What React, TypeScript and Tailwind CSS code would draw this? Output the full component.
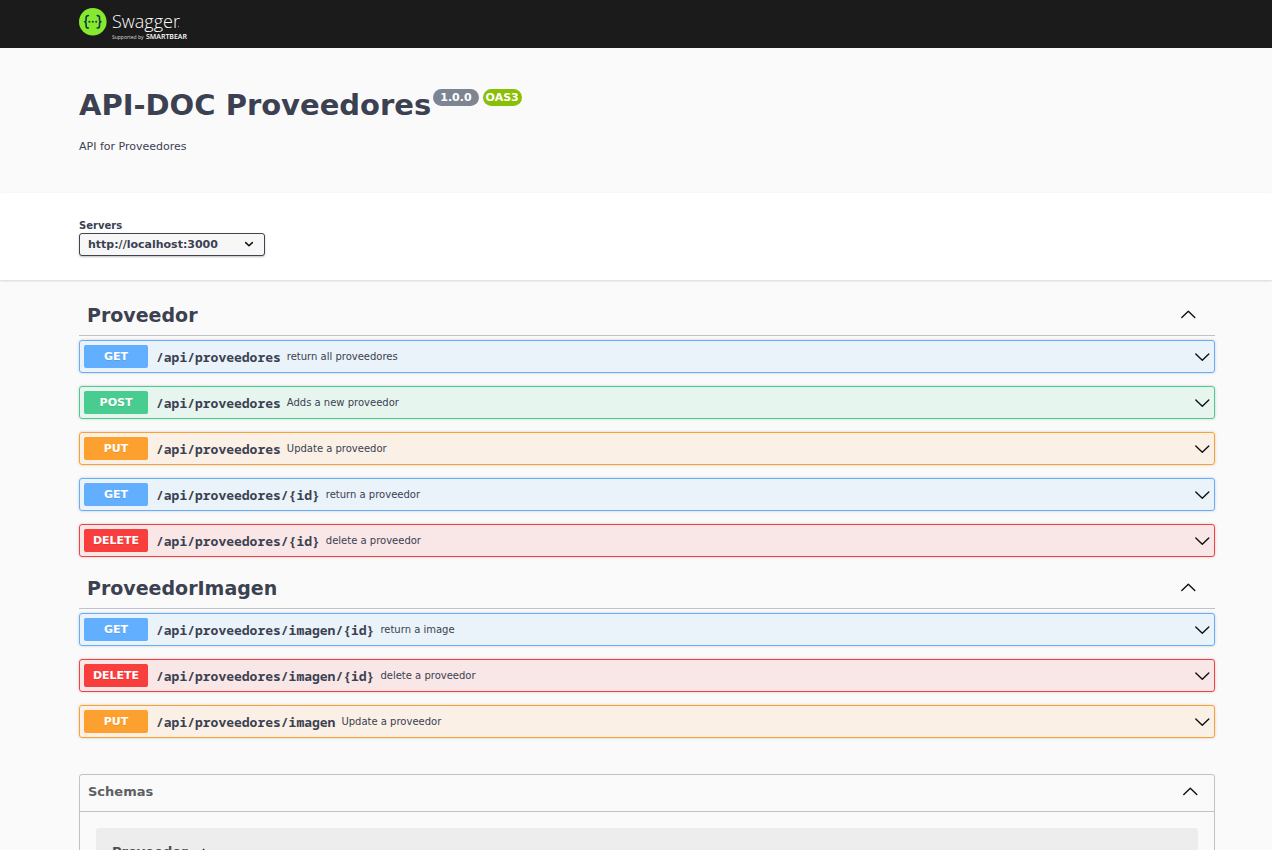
import { useState } from "react";

type Method = "GET" | "POST" | "PUT" | "DELETE";
type Operation = { method: Method; path: string; summary: string };

const groups: { name: string; operations: Operation[] }[] = [
  {
    name: "Proveedor",
    operations: [
      { method: "GET", path: "/api/proveedores", summary: "return all proveedores" },
      { method: "POST", path: "/api/proveedores", summary: "Adds a new proveedor" },
      { method: "PUT", path: "/api/proveedores", summary: "Update a proveedor" },
      { method: "GET", path: "/api/proveedores/{id}", summary: "return a proveedor" },
      { method: "DELETE", path: "/api/proveedores/{id}", summary: "delete a proveedor" },
    ],
  },
  {
    name: "ProveedorImagen",
    operations: [
      { method: "GET", path: "/api/proveedores/imagen/{id}", summary: "return a image" },
      { method: "DELETE", path: "/api/proveedores/imagen/{id}", summary: "delete a proveedor" },
      { method: "PUT", path: "/api/proveedores/imagen", summary: "Update a proveedor" },
    ],
  },
];

const rowStyles: Record<Method, string> = {
  GET: "border-[#61affe] bg-[#61affe]/10",
  POST: "border-[#49cc90] bg-[#49cc90]/10",
  PUT: "border-[#fca130] bg-[#fca130]/10",
  DELETE: "border-[#f93e3e] bg-[#f93e3e]/10",
};

const badgeStyles: Record<Method, string> = {
  GET: "bg-[#61affe]",
  POST: "bg-[#49cc90]",
  PUT: "bg-[#fca130]",
  DELETE: "bg-[#f93e3e]",
};

function Chevron({ up = false }: { up?: boolean }) {
  return (
    <svg viewBox="0 0 16 16" className="w-4 h-4 flex-shrink-0" fill="none" stroke="#111" strokeWidth="1.4" strokeLinecap="round" strokeLinejoin="round" aria-hidden="true">
      <path d={up ? "M1.8 10.6 8.3 4.2l6.5 6.4" : "M1.8 4.9 8.3 11.3l6.5-6.4"} />
    </svg>
  );
}

function Logo() {
  return (
    <svg viewBox="0 0 114 34" className="w-[114px] h-[34px]" role="img" aria-label="Swagger">
      <circle cx="13.8" cy="13.8" r="13.8" fill="#85ea2d" />
      <g fill="none" stroke="#173647" strokeWidth="1.6" strokeLinecap="round" strokeLinejoin="round">
        <path d="M9.4 7.6c-1.7 0-2.3.6-2.3 2v1.8c0 1.5-.5 2.3-1.5 2.3 1 0 1.5.8 1.5 2.3v1.9c0 1.5.6 2.1 2.3 2.1" />
        <path d="M18.2 7.6c1.7 0 2.3.6 2.3 2v1.8c0 1.5.5 2.3 1.5 2.3-1 0-1.5.8-1.5 2.3v1.9c0 1.5-.6 2.1-2.3 2.1" />
      </g>
      <g fill="#173647">
        <circle cx="10.4" cy="13.7" r="1" />
        <circle cx="13.8" cy="13.7" r="1" />
        <circle cx="17.2" cy="13.7" r="1" />
      </g>
      <text x="33" y="20" fill="#fff" fontSize="18" fontWeight="300" fontFamily="'Open Sans', 'Noto Sans', sans-serif">Swagger</text>
      <circle cx="99.5" cy="18.6" r=".6" fill="#999" />
      <text x="33" y="31" fill="#ddd" fontSize="5" fontFamily="'Open Sans', 'Noto Sans', sans-serif">Supported by</text>
      <text x="67" y="31" fill="#fff" fontSize="7" fontWeight="600" fontFamily="'Open Sans', 'Noto Sans', sans-serif">SMARTBEAR</text>
    </svg>
  );
}

function OperationRow({ method, path, summary }: Operation) {
  return (
    <button type="button" className={`w-full h-[33px] flex items-center pl-1 pr-1 border rounded-[3px] text-left shadow-[0_0_3px_rgba(0,0,0,0.19)] ${rowStyles[method]}`}>
      <span className={`w-16 h-[23px] rounded-[2px] text-center text-[11px] leading-6 font-bold text-white flex-shrink-0 [text-shadow:0_1px_0_rgba(0,0,0,0.1)] ${badgeStyles[method]}`}>{method}</span>
      <span className="pl-2 font-['Noto_Sans_Mono','DejaVu_Sans_Mono',monospace] text-[13px] leading-4 font-bold">{path}</span>
      <span className="flex-1 pl-1.5 text-[10px] leading-4">{summary}</span>
      <Chevron />
    </button>
  );
}

function OperationGroup({ name, operations }: { name: string; operations: Operation[] }) {
  const [open, setOpen] = useState(true);

  return (
    <section className="mb-2.5">
      <h3 className="border-b border-[#3b4151]/30">
        <button type="button" aria-expanded={open} onClick={() => setOpen(!open)} className="w-full h-[41px] pl-2 pr-[19px] flex items-center justify-between text-[19px] font-bold">
          <span className="pt-0.5">{name}</span>
          <Chevron up={open} />
        </button>
      </h3>
      {open && (
        <div className="pt-1 flex flex-col gap-[13px]">
          {operations.map((op) => (
            <OperationRow key={op.method + op.path} {...op} />
          ))}
        </div>
      )}
    </section>
  );
}

export default function App() {
  const [schemasOpen, setSchemasOpen] = useState(true);

  return (
    <div className="min-h-screen bg-[#fafafa] text-[#3b4151] font-['DejaVu_Sans',sans-serif]">
      <header className="bg-[#1b1b1b] h-12 pl-[79px] pt-2">
        <a href="#" className="inline-block">
          <Logo />
        </a>
      </header>

      {/* Title and description */}
      <div className="pl-[79px] pr-[57px] pt-10 pb-[38px]">
        <div className="flex items-start gap-0.5">
          <h1 className="text-[29px] leading-[34px] font-bold">API-DOC Proveedores</h1>
          <div className="pt-px flex gap-1 text-white text-[11px] leading-[18px] font-bold">
            <span className="h-[17px] px-[7px] rounded-full bg-[#7d8492]">1.0.0</span>
            <span className="h-[17px] px-[3px] rounded-full bg-[#89bf04]">OAS3</span>
          </div>
        </div>
        <p className="mt-[17px] text-[11px] leading-4">API for Proveedores</p>
      </div>

      {/* Server picker */}
      <div className="bg-white pl-[79px] pr-[57px] pt-[26px] pb-6 shadow-[0_1px_2px_rgba(0,0,0,0.15)]">
        <label htmlFor="servers" className="block text-[10px] leading-[14px] font-bold">Servers</label>
        <div className="relative w-[186px]">
          <select id="servers" className="block appearance-none w-full h-[23px] pt-0.5 pl-2 pr-8 border border-[#41444e] rounded-[3px] bg-[#f7f7f7] text-[11px] font-bold shadow-[0_1px_2px_rgba(0,0,0,0.25)]">
            <option>http://localhost:3000</option>
          </select>
          <svg viewBox="0 0 10 10" className="absolute right-[11px] top-[7px] w-2.5 h-2.5 pointer-events-none" fill="none" stroke="#111" strokeWidth="1.5" strokeLinecap="round" strokeLinejoin="round" aria-hidden="true">
            <path d="M1.7 2.6 5 5.8 8.3 2.6" />
          </svg>
        </div>
      </div>

      <main className="pl-[79px] pr-[57px] pt-[14px] pb-10">
        {groups.map((group) => (
          <OperationGroup key={group.name} {...group} />
        ))}

        <section className="mt-9 border border-[#3b4151]/30 rounded-[3px]">
          <h4 className="border-b border-[#3b4151]/30">
            <button type="button" aria-expanded={schemasOpen} onClick={() => setSchemasOpen(!schemasOpen)} className="w-full h-9 pb-[3px] pl-2 pr-4 flex items-center justify-between text-[13px] font-bold text-[#606060]">
              Schemas
              <Chevron up={schemasOpen} />
            </button>
          </h4>
          {schemasOpen && (
            <div className="p-4">
              <button type="button" className="w-full px-4 py-4 flex items-center gap-3 rounded-[3px] bg-black/5 text-[13px] leading-4 font-bold text-[#505050]">
                Proveedor
                <svg viewBox="0 0 10 10" className="w-2.5 h-2.5" fill="none" stroke="#222" strokeWidth="1.2" aria-hidden="true">
                  <path d="M3 2 7 6 3 10" />
                </svg>
              </button>
            </div>
          )}
        </section>
      </main>
    </div>
  );
}
